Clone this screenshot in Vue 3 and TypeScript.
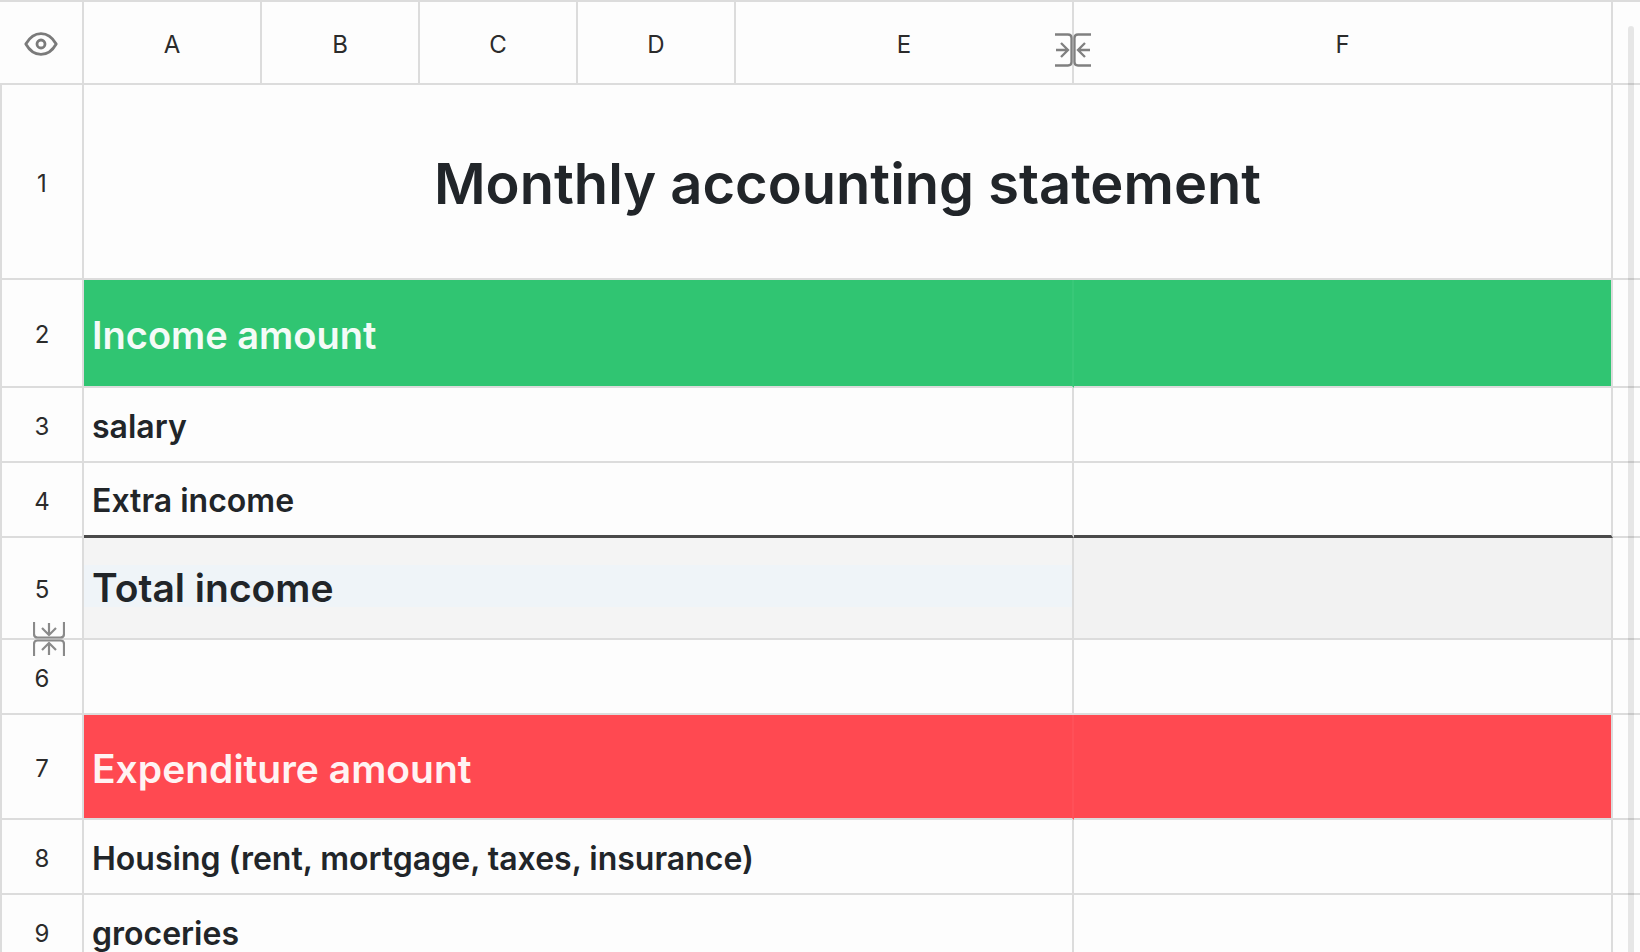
<script setup lang="ts">
interface SheetRow {
  id: number
  label: string
  kind: 'title' | 'income' | 'item' | 'last-item' | 'total' | 'expense'
}

const columns: string[] = ['A', 'B', 'C', 'D', 'E', 'F']

const rows: SheetRow[] = [
  { id: 1, label: 'Monthly accounting statement', kind: 'title' },
  { id: 2, label: 'Income amount', kind: 'income' },
  { id: 3, label: 'salary', kind: 'item' },
  { id: 4, label: 'Extra income', kind: 'last-item' },
  { id: 5, label: 'Total income', kind: 'total' },
  { id: 6, label: '', kind: 'item' },
  { id: 7, label: 'Expenditure amount', kind: 'expense' },
  { id: 8, label: 'Housing (rent, mortgage, taxes, insurance)', kind: 'item' },
  { id: 9, label: 'groceries', kind: 'item' },
]
</script>

<template>
  <main class="sheet">
    <table class="grid">
      <colgroup>
        <col class="col-index" />
        <col v-for="name in columns" :key="name" :class="'col-' + name.toLowerCase()" />
        <col class="col-edge" />
      </colgroup>
      <thead>
        <tr>
          <th class="corner">
            <button class="icon-button eye" type="button" aria-label="Toggle visibility">
              <svg width="34" height="24" viewBox="0 0 34 24" fill="none" stroke="#7a7a7a" stroke-width="2.8">
                <path d="M1.8 12C5.5 5.5 10.700 1.600 17 1.600S28.500 5.500 32.200 12C28.500 18.500 23.300 22.400 17 22.400S5.500 18.500 1.800 12Z" stroke-linejoin="round" />
                <circle cx="17" cy="12" r="4" />
              </svg>
            </button>
          </th>
          <th v-for="name in columns" :key="name" scope="col">
            {{ name }}
            <button v-if="name === 'E'" class="icon-button resize-column" type="button" aria-label="Resize column E">
              <svg width="36" height="34" viewBox="0 0 36 34" fill="none" stroke="#808080" stroke-width="2.3">
                <path d="M0 1.500H13Q16.500 1.500 16.500 5V29Q16.500 32.500 13 32.500H0M36 1.500H23Q19.500 1.500 19.500 5V29Q19.500 32.500 23 32.500H36" />
                <path d="M1 17H13M6 10L13 17L6 24M35 17H23M30 10L23 17L30 24" />
              </svg>
            </button>
          </th>
          <th class="edge"></th>
        </tr>
      </thead>
      <tbody>
        <tr v-for="row in rows" :key="row.id" :class="row.kind">
          <th class="index" scope="row">
            {{ row.id }}
            <button v-if="row.id === 5" class="icon-button resize-row" type="button" aria-label="Resize row 5">
              <svg width="32" height="34" viewBox="0 0 32 34" fill="none" stroke="#8a8a8a" stroke-width="2.2">
                <path d="M1 0V12Q1 15.500 4.500 15.500H27.500Q31 15.500 31 12V0M1 34V22Q1 18.500 4.500 18.500H27.500Q31 18.500 31 22V34" />
                <path d="M16 1V13M9 6L16 13L23 6M16 33V21M9 28L16 21L23 28" />
              </svg>
            </button>
          </th>
          <td v-if="row.kind === 'title'" class="label" colspan="6">{{ row.label }}</td>
          <template v-else>
            <td class="label" colspan="5"><span class="text">{{ row.label }}</span></td>
            <td class="amount"></td>
          </template>
          <td class="edge"></td>
        </tr>
      </tbody>
    </table>
    <div class="scrollbar"></div>
  </main>
</template>

<style>
body {
  margin: 0;
  background: #fdfdfd;
}
</style>

<style scoped>
.sheet {
  --line: #dcdcdc;
  position: relative;
  height: 100vh;
  overflow: hidden;
  background: #fdfdfd;
  color: #212529;
  font-family: Inter, "Liberation Sans", sans-serif;
}

.grid {
  width: 100%;
  table-layout: fixed;
  border-collapse: separate;
  border-spacing: 0;
  border-top: 2px solid var(--line);
}

.col-index { width: 84px; }
.col-a { width: 178px; }
.col-b,
.col-c,
.col-d { width: 158px; }
.col-e { width: 338px; }
.col-edge { width: 27px; }

th,
td {
  box-sizing: border-box;
  height: 75px;
  padding: 4px 0 0;
  border-right: 2px solid var(--line);
  border-bottom: 2px solid var(--line);
  vertical-align: middle;
}

th {
  position: relative;
  color: #2b2b2b;
  font-size: 24px;
  font-weight: 400;
  line-height: 32px;
  text-align: center;
}

thead th { height: 83px; }

thead .corner { padding-top: 0; }

.index { border-left: 2px solid var(--line); }

.edge { border-right: 0; }

.label {
  padding-left: 8px;
  font-size: 32px;
  font-weight: 600;
  line-height: 42px;
  text-align: left;
  white-space: nowrap;
}

.text { display: block; }

.title .label {
  height: 195px;
  padding-left: 0;
  font-size: 56px;
  line-height: 72px;
  text-align: center;
}

.income .label { font-size: 38px; }

.total .label,
.expense .label { font-size: 39px; }

.income .label { height: 108px; }

.expense .label { height: 105px; }

.income .label,
.income .amount {
  border-right-color: #38c878;
  background: #30c572;
  color: #f4fbf7;
}

.expense .label,
.expense .amount {
  border-right-color: #ff5058;
  background: #ff4951;
  color: #fff3f3;
}

.income .amount,
.expense .amount {
  border-right-color: var(--line);
}

.last-item .label,
.last-item .amount {
  border-bottom: 3px solid #4a4a4a;
}

.total .label {
  height: 102px;
  padding: 0 0 4px;
  background: #f4f4f4;
}

.total .text {
  padding: 4px 0 0 8px;
  background: #eff4f8;
  line-height: 38px;
}

.total .amount { background: #f2f2f2; }

.icon-button {
  padding: 0;
  border: 0;
  background: none;
  cursor: pointer;
}

.icon-button svg { display: block; }

.eye { vertical-align: middle; }

.resize-column {
  position: absolute;
  z-index: 1;
  top: 31px;
  right: -19px;
  cursor: col-resize;
}

.resize-row {
  position: absolute;
  z-index: 1;
  bottom: -18px;
  left: 31px;
  cursor: row-resize;
}

.scrollbar {
  position: absolute;
  top: 26px;
  right: 6px;
  bottom: 0;
  width: 6px;
  border-radius: 3px 3px 0 0;
  background: rgba(0, 0, 0, 0.09);
}
</style>
